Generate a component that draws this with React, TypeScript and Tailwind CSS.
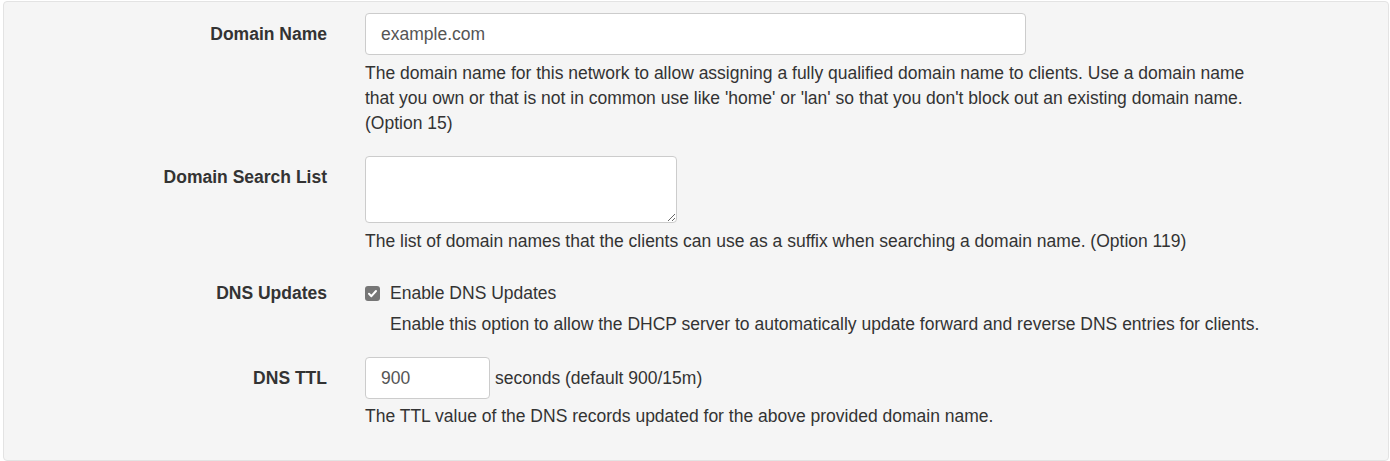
import React from "react";

function Label({ children, top = true }: { children: React.ReactNode; top?: boolean }) {
  return (
    <div className={`w-[323px] shrink-0 text-right font-bold text-[#333] ${top ? "pt-[9px]" : ""}`}>
      {children}
    </div>
  );
}

export default function App() {
  return (
    <div
      className="pl-[3px] pt-[1px] text-[17.5px] leading-[25px] text-[#333]"
      style={{ fontFamily: '"Liberation Sans", Arial, sans-serif' }}
    >
      <div className="w-[1386px] h-[460px] rounded-[4px] border border-[#e3e3e3] bg-[#f5f5f5] pt-[11px]">
        {/* Domain Name */}
        <div className="flex">
          <Label>Domain Name</Label>
          <div className="ml-[38px] w-[903px]">
            <div className="h-[42px] w-[661px] rounded-[4px] border border-[#ccc] bg-white px-[15px] pt-[8px] pb-[6px] text-[#555]">
              example.com
            </div>
            <div className="mt-[6px]">
              The domain name for this network to allow assigning a fully qualified domain name to clients. Use a domain name that you own or that is not in common use like 'home' or 'lan' so that you don't block out an existing domain name. (Option 15)
            </div>
          </div>
        </div>

        {/* Domain Search List */}
        <div className="mt-[20px] flex">
          <Label>Domain Search List</Label>
          <div className="ml-[38px] w-[903px]">
            <textarea
              className="block h-[67px] w-[312px] rounded-[4px] border border-[#ccc] bg-white px-[15px] py-[7px] text-[#555] outline-none"
              defaultValue=""
            />
            <div className="mt-[6px]">
              The list of domain names that the clients can use as a suffix when searching a domain name. (Option 119)
            </div>
          </div>
        </div>

        {/* DNS Updates */}
        <div className="mt-[27px] flex">
          <Label top={false}>DNS Updates</Label>
          <div className="ml-[38px] w-[903px]">
            <div className="flex items-center">
              <span className="flex h-[15px] w-[15px] items-center justify-center rounded-[3px] bg-[#767676]">
                <svg width="11" height="11" viewBox="0 0 11 11" fill="none">
                  <path d="M2 5.8 L4.4 8.2 L9 3" stroke="white" strokeWidth="2" strokeLinecap="round" strokeLinejoin="round" />
                </svg>
              </span>
              <span className="ml-[10px]">Enable DNS Updates</span>
            </div>
            <div className="mt-[6px] pl-[25px]">
              Enable this option to allow the DHCP server to automatically update forward and reverse DNS entries for clients.
            </div>
          </div>
        </div>

        {/* DNS TTL */}
        <div className="mt-[20px] flex">
          <Label>DNS TTL</Label>
          <div className="ml-[38px] w-[903px]">
            <div className="flex items-center">
              <div className="h-[42px] w-[125px] rounded-[4px] border border-[#ccc] bg-white px-[15px] pt-[8px] pb-[6px] text-[#555]">
                900
              </div>
              <span className="ml-[5px]">seconds (default 900/15m)</span>
            </div>
            <div className="mt-[5px]">
              The TTL value of the DNS records updated for the above provided domain name.
            </div>
          </div>
        </div>
      </div>
    </div>
  );
}
